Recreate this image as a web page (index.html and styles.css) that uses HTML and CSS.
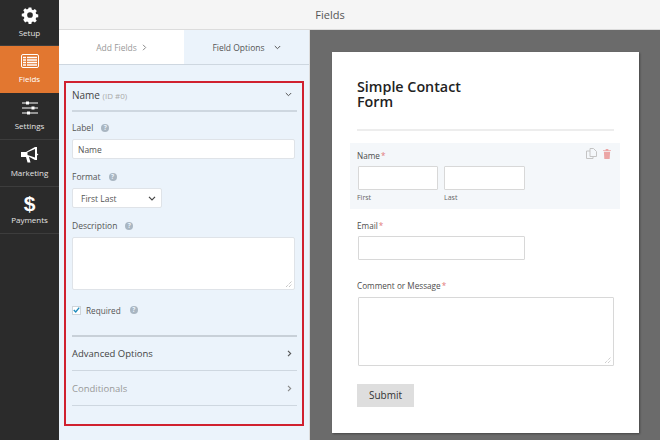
FILE: index.html
```html
<!DOCTYPE html>
<html lang="en">
<head>
<meta charset="utf-8">
<title>Fields</title>
<link rel="stylesheet" href="styles.css">
</head>
<body>
<div class="app">
  <nav class="sidebar">
    <div class="nav-item">
      <svg class="nav-icon" viewBox="0 0 24 24" width="18" height="18"><path fill="#fff" d="M10 1h4l.6 3 2 .9 2.600-1.700 2.800 2.800-1.700 2.600.9 2 3 .6v4l-3 .6-.9 2 1.700 2.600-2.800 2.800-2.600-1.700-2 .9-.6 3h-4l-.6-3-2-.9-2.600 1.700L2 19.200l1.700-2.600-.9-2-3-.6v-4l3-.6.9-2L2 4.800 4.800 2l2.600 1.700 2-.9z" transform="translate(1.200 1.200) scale(.9)"/><circle cx="12" cy="12" r="3.800" fill="#2b2b2b"/></svg>
      <span>Setup</span>
    </div>
    <div class="nav-item active">
      <svg class="nav-icon" viewBox="0 0 18 14" width="18" height="14"><rect x=".5" y=".5" width="17" height="13" rx="1.500" fill="none" stroke="#fff"/><path stroke="#fff" stroke-width="1.300" d="M2 3.500h14M2 6h14M2 8.500h14M2 11h14"/><path stroke="#e27730" stroke-width="1" d="M5.500 2v10"/></svg>
      <span>Fields</span>
    </div>
    <div class="nav-item">
      <svg class="nav-icon" viewBox="0 0 16 14" width="16" height="14"><path stroke="#fff" stroke-width="1.200" d="M0 2h16M0 7h16M0 12h16"/><path fill="#fff" d="M4 .5h3v3H4zM9.500 5.500h3v3h-3zM5 10.500h3v3H5z"/></svg>
      <span>Settings</span>
    </div>
    <div class="nav-item">
      <svg class="nav-icon" viewBox="0 0 18 16" width="18" height="16"><path fill="#fff" d="M0 5h5l9-5h2v6.500l1.500 1-1.500 1V13h-2L8 9.800V10L9.500 15.500H6.500L5 10H0z"/><path fill="#2b2b2b" d="M6.500 5.300 14 2v8.500L6.500 8z"/></svg>
      <span>Marketing</span>
    </div>
    <div class="nav-item">
      <span class="dollar">$</span>
      <span>Payments</span>
    </div>
  </nav>
  <div class="main">
    <header class="topbar">Fields</header>
    <div class="workspace">
      <section class="panel">
        <div class="tabs">
          <div class="tab">Add Fields
            <svg class="chev" width="5" height="7" viewBox="0 0 5 7"><path d="M1 .8l2.700 2.700L1 6.200" fill="none" stroke="#888" stroke-width="1"/></svg>
          </div>
          <div class="tab current">Field Options
            <svg class="chev down" width="7" height="5" viewBox="0 0 7 5"><path d="M.8 1l2.700 2.700L6.200 1" fill="none" stroke="#555" stroke-width="1"/></svg>
          </div>
        </div>
        <div class="options">
          <div class="frame">
            <div class="group-head">
              <span class="group-title">Name <small>(ID #0)</small></span>
              <svg class="head-chev" width="7" height="5" viewBox="0 0 7 5"><path d="M.8 1l2.700 2.700L6.200 1" fill="none" stroke="#555" stroke-width="1"/></svg>
            </div>
            <div class="label-row gap-label">Label <i class="help">?</i></div>
            <div class="input wide">Name</div>
            <div class="label-row gap-format">Format <i class="help">?</i></div>
            <div class="input select">First Last
              <svg width="8" height="5" viewBox="0 0 8 5"><path d="M1 .8l3 3 3-3" fill="none" stroke="#444" stroke-width="1.200"/></svg>
            </div>
            <div class="label-row gap-desc">Description <i class="help">?</i></div>
            <div class="input area">
              <svg class="grip" width="6" height="6" viewBox="0 0 6 6"><path stroke="#999" stroke-width=".8" stroke-dasharray="1 1" d="M0 6l6-6M3 6l3-3"/></svg>
            </div>
            <div class="required">
              <span class="check"><svg width="9" height="8" viewBox="0 0 9 8"><path d="M1 4l2.500 2.500L8 1" fill="none" stroke="#1e8cbe" stroke-width="1.800"/></svg></span>
              Required <i class="help">?</i>
            </div>
            <div class="section strong">Advanced Options
              <svg width="5" height="7" viewBox="0 0 5 7"><path d="M1 .8l2.700 2.700L1 6.200" fill="none" stroke="#555" stroke-width="1.100"/></svg>
            </div>
            <div class="section muted">Conditionals
              <svg width="5" height="7" viewBox="0 0 5 7"><path d="M1 .8l2.700 2.700L1 6.200" fill="none" stroke="#888" stroke-width="1.100"/></svg>
            </div>
          </div>
        </div>
      </section>
      <section class="preview">
        <div class="sheet">
          <h1 class="form-title">Simple Contact<br>Form</h1>
          <hr class="rule">
          <div class="field selected">
            <div class="tools">
              <svg width="11" height="11" viewBox="0 0 11 11"><path d="M4 .5h3.500L10.500 3.500v5h-6.500zM4 3H.5v7.500H7V8.500" fill="none" stroke="#c4c4c4"/></svg>
              <svg width="8" height="10" viewBox="0 0 9 11"><path fill="#eba5a5" d="M1 3h7l-.5 8h-6zM0 1.200h3V0h3v1.200h3v1H0z"/></svg>
            </div>
            <div class="f-label">Name<b>*</b></div>
            <div class="name-row">
              <div class="sub"><div class="box short"></div><span>First</span></div>
              <div class="sub"><div class="box short"></div><span>Last</span></div>
            </div>
          </div>
          <div class="field">
            <div class="f-label">Email<b>*</b></div>
            <div class="box medium"></div>
          </div>
          <div class="field comment">
            <div class="f-label">Comment or Message<b>*</b></div>
            <div class="box large">
              <svg class="grip" width="6" height="6" viewBox="0 0 6 6"><path stroke="#aaa" stroke-width=".8" stroke-dasharray="1 1" d="M0 6l6-6M3 6l3-3"/></svg>
            </div>
          </div>
          <div class="submit">Submit</div>
        </div>
      </section>
    </div>
  </div>
</div>
</body>
</html>
```
FILE: styles.css
```css
* { box-sizing: border-box; }
html, body { margin: 0; padding: 0; }
body {
  width: 660px;
  height: 440px;
  overflow: hidden;
  font-family: "Open Sans", "Noto Sans", sans-serif;
  color: #444;
  background: #fff;
}
.app { display: flex; height: 440px; }

.sidebar { width: 59px; flex: none; background: #2b2b2b; }
.nav-item {
  height: 47px;
  padding-top: 6px;
  display: flex;
  flex-direction: column;
  align-items: center;
  justify-content: flex-start;
  border-bottom: 1px solid #3d3d3d;
  color: #e4e4e4;
  font-size: 8px;
  line-height: 12px;
}
.nav-item:first-child { height: 46px; }
.nav-item.active { background: #e27730; color: #fff; border-bottom-color: #e27730; }
.nav-icon { height: 18px; margin-bottom: 3px; }
.dollar { font-size: 21px; font-weight: 700; color: #fff; line-height: 21px; height: 21px; font-family: "Liberation Sans", sans-serif; }

.main { flex: 1; display: flex; flex-direction: column; min-width: 0; }
.topbar {
  height: 30px;
  flex: none;
  background: #f5f5f5;
  border-bottom: 1px solid #dcdcdc;
  text-align: center;
  font-size: 11px;
  line-height: 29px;
  color: #555;
  padding-right: 59px;
}
.workspace { flex: 1; display: flex; min-height: 0; }

.panel { width: 251px; flex: none; background: #ebf3fb; border-right: 1px solid #dcdcdc; display: flex; flex-direction: column; }
.tabs { display: flex; height: 35px; flex: none; border-bottom: 1px solid #ced7e0; }
.tab {
  flex: 1;
  background: #fff;
  display: flex;
  align-items: center;
  justify-content: center;
  gap: 5px;
  font-size: 8.500px;
  color: #999;
}
.tab.current { background: #ebf3fb; color: #555; flex: 0 0 125px; }
.tab.current .chev { margin-left: 4px; }

.options { padding: 16px 5px 0; }
.frame {
  width: 240px;
  height: 345px;
  border: 2px solid #d0202f;
  padding: 0 5px 0 6px;
}
.group-head {
  height: 29px;
  padding: 0 5px 4px 0;
  border-bottom: 2px solid #ced7e0;
  display: flex;
  align-items: center;
  justify-content: space-between;
  font-size: 10px;
  color: #444;
}
.group-title small { font-size: 8px; color: #aaa; }
.head-chev { margin-bottom: 1px; }
.label-row { font-size: 8.500px; line-height: 12px; color: #555; display: flex; align-items: center; gap: 8px; }
.gap-label { margin-top: 10px; }
.gap-format { margin-top: 12px; }
.gap-desc { margin-top: 12px; }
.help {
  width: 8px;
  height: 8px;
  border-radius: 50%;
  background: #a9b6c2;
  color: #ebf3fb;
  font-size: 6.500px;
  line-height: 8px;
  font-style: normal;
  font-weight: 700;
  text-align: center;
  display: inline-block;
}
.input {
  background: #fff;
  border: 1px solid #dfe3e8;
  border-radius: 2px;
  font-size: 8.500px;
  color: #555;
  display: flex;
  align-items: center;
}
.wide { width: 223px; height: 20px; margin-top: 5px; padding-left: 5px; }
.select { width: 90px; height: 20px; margin-top: 5px; padding: 0 5px 0 8px; justify-content: space-between; }
.area { width: 223px; height: 53px; margin-top: 5px; position: relative; }
.grip { position: absolute; right: 2px; bottom: 2px; }
.required {
  display: flex;
  align-items: center;
  font-size: 8.200px;
  color: #555;
  gap: 5px;
  margin-top: 14px;
  height: 12px;
}
.required .help { margin-left: 4px; }
.check {
  width: 9px;
  height: 9px;
  background: #fff;
  border: 1px solid #cfd5da;
  display: flex;
  align-items: center;
  justify-content: center;
}
.section {
  height: 35px;
  padding-right: 5px;
  border-top: 1px solid #ced7e0;
  display: flex;
  align-items: center;
  justify-content: space-between;
  font-size: 9.500px;
}
.strong { margin-top: 19px; color: #444; border-top: 2px solid #c8d0d8; }
.muted { height: 36px; color: #999; border-bottom: 1px solid #ced7e0; }

.preview { flex: 1; background: #6b6b6b; padding: 22px 21px 0 22px; }
.sheet {
  width: 307px;
  height: 381px;
  background: #fff;
  padding: 27px 25px 0;
  box-shadow: 1px 1px 2px rgba(0,0,0,.35);
}
.form-title {
  margin: 0;
  font-size: 14.300px;
  line-height: 15px;
  font-weight: 600;
  color: #222;
}
.rule { border: 0; height: 2px; background: #ededed; margin: 20px 0 12px; }
.f-label { font-size: 8.200px; line-height: 12px; font-weight: 500; color: #4d4d4d; }
.f-label b { color: #e27a7a; font-weight: 500; margin-left: 1px; }
.field { width: 257px; }
.field.selected {
  width: 270px;
  height: 66px;
  margin: 0 -7px;
  padding: 7px 7px 0;
  background: #f4f7fa;
  position: relative;
}
.tools { position: absolute; top: 5px; right: 9px; display: flex; gap: 6px; align-items: center; }
.name-row { display: flex; gap: 6px; margin-top: 4px; }
.sub span { font-size: 7px; line-height: 11px; color: #666; display: block; margin-top: 2px; }
.box { background: #fff; border: 1px solid #d8d8d8; border-radius: 1px; position: relative; margin-left: 1px; }
.short { width: 80px; height: 24px; }
.sub + .sub .short { width: 81px; margin-left: 0; }
.field + .field { margin-top: 11px; }
.medium { width: 167px; height: 24px; margin-top: 4px; }
.field.comment { margin-top: 20px; }
.large { width: 256px; height: 69px; margin-top: 5px; }
.submit {
  width: 57px;
  height: 23px;
  margin-top: 18px;
  background: #dedede;
  color: #333;
  font-size: 10px;
  line-height: 23px;
  text-align: center;
}
```
